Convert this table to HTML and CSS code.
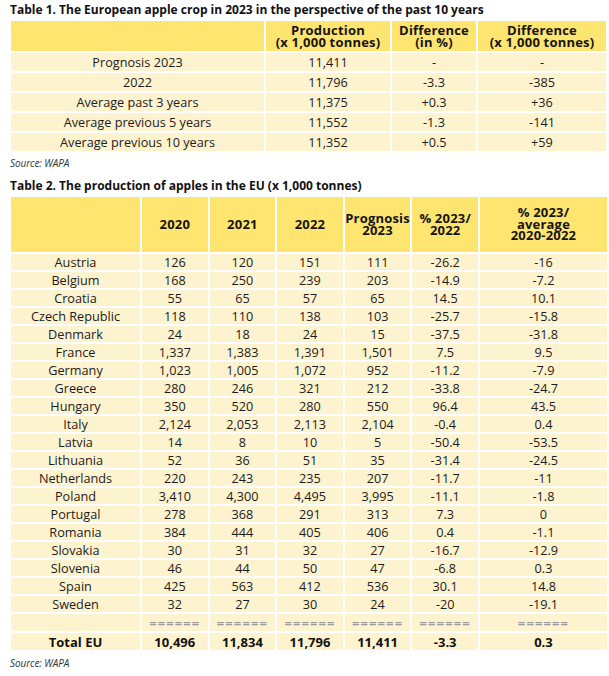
FILE: index.html
```html
<!DOCTYPE html>
<html>
<head>
<meta charset="utf-8">
<link rel="stylesheet" href="styles.css">
</head>
<body>
<div class="page">
  <h2 class="title t1">Table 1. The European apple crop in 2023 in the perspective of the past 10 years</h2>
  <table class="tbl tbl1">
    <colgroup><col class="c1a"><col class="c1b"><col class="c1c"><col class="c1d"></colgroup>
    <thead>
      <tr class="head1">
        <th></th>
        <th>Production<br>(x 1,000 tonnes)</th>
        <th>Difference<br>(in %)</th>
        <th>Difference<br>(x 1,000 tonnes)</th>
      </tr>
    </thead>
    <tbody>
      <tr><td>Prognosis 2023</td><td>11,411</td><td>-</td><td>-</td></tr>
      <tr><td>2022</td><td>11,796</td><td>-3.3</td><td>-385</td></tr>
      <tr><td>Average past 3 years</td><td>11,375</td><td>+0.3</td><td>+36</td></tr>
      <tr><td>Average previous 5 years</td><td>11,552</td><td>-1.3</td><td>-141</td></tr>
      <tr><td>Average previous 10 years</td><td>11,352</td><td>+0.5</td><td>+59</td></tr>
    </tbody>
  </table>
  <p class="source s1">Source: WAPA</p>

  <h2 class="title t2">Table 2. The production of apples in the EU (x 1,000 tonnes)</h2>
  <table class="tbl tbl2">
    <colgroup><col class="c2a"><col class="c2n"><col class="c2n"><col class="c2n"><col class="c2n"><col class="c2n"><col class="c2z"></colgroup>
    <thead>
      <tr class="head2">
        <th></th>
        <th>2020</th>
        <th>2021</th>
        <th>2022</th>
        <th>Prognosis<br>2023</th>
        <th>% 2023/<br>2022</th>
        <th>% 2023/<br>average<br>2020-2022</th>
      </tr>
    </thead>
    <tbody>
      <tr><td>Austria</td><td>126</td><td>120</td><td>151</td><td>111</td><td>-26.2</td><td>-16</td></tr>
      <tr><td>Belgium</td><td>168</td><td>250</td><td>239</td><td>203</td><td>-14.9</td><td>-7.2</td></tr>
      <tr><td>Croatia</td><td>55</td><td>65</td><td>57</td><td>65</td><td>14.5</td><td>10.1</td></tr>
      <tr><td>Czech Republic</td><td>118</td><td>110</td><td>138</td><td>103</td><td>-25.7</td><td>-15.8</td></tr>
      <tr><td>Denmark</td><td>24</td><td>18</td><td>24</td><td>15</td><td>-37.5</td><td>-31.8</td></tr>
      <tr><td>France</td><td>1,337</td><td>1,383</td><td>1,391</td><td>1,501</td><td>7.5</td><td>9.5</td></tr>
      <tr><td>Germany</td><td>1,023</td><td>1,005</td><td>1,072</td><td>952</td><td>-11.2</td><td>-7.9</td></tr>
      <tr><td>Greece</td><td>280</td><td>246</td><td>321</td><td>212</td><td>-33.8</td><td>-24.7</td></tr>
      <tr><td>Hungary</td><td>350</td><td>520</td><td>280</td><td>550</td><td>96.4</td><td>43.5</td></tr>
      <tr><td>Italy</td><td>2,124</td><td>2,053</td><td>2,113</td><td>2,104</td><td>-0.4</td><td>0.4</td></tr>
      <tr><td>Latvia</td><td>14</td><td>8</td><td>10</td><td>5</td><td>-50.4</td><td>-53.5</td></tr>
      <tr><td>Lithuania</td><td>52</td><td>36</td><td>51</td><td>35</td><td>-31.4</td><td>-24.5</td></tr>
      <tr><td>Netherlands</td><td>220</td><td>243</td><td>235</td><td>207</td><td>-11.7</td><td>-11</td></tr>
      <tr><td>Poland</td><td>3,410</td><td>4,300</td><td>4,495</td><td>3,995</td><td>-11.1</td><td>-1.8</td></tr>
      <tr><td>Portugal</td><td>278</td><td>368</td><td>291</td><td>313</td><td>7.3</td><td>0</td></tr>
      <tr><td>Romania</td><td>384</td><td>444</td><td>405</td><td>406</td><td>0.4</td><td>-1.1</td></tr>
      <tr><td>Slovakia</td><td>30</td><td>31</td><td>32</td><td>27</td><td>-16.7</td><td>-12.9</td></tr>
      <tr><td>Slovenia</td><td>46</td><td>44</td><td>50</td><td>47</td><td>-6.8</td><td>0.3</td></tr>
      <tr><td>Spain</td><td>425</td><td>563</td><td>412</td><td>536</td><td>30.1</td><td>14.8</td></tr>
      <tr><td>Sweden</td><td>32</td><td>27</td><td>30</td><td>24</td><td>-20</td><td>-19.1</td></tr>
      <tr class="sep"><td></td><td>======</td><td>======</td><td>======</td><td>======</td><td>======</td><td>======</td></tr>
      <tr class="total"><td>Total EU</td><td>10,496</td><td>11,834</td><td>11,796</td><td>11,411</td><td>-3.3</td><td>0.3</td></tr>
    </tbody>
  </table>
  <p class="source s2">Source: WAPA</p>
</div>
</body>
</html>
```

FILE: styles.css
```css
html, body {
  margin: 0;
  padding: 0;
  background: #ffffff;
}
body {
  font-family: "Open Sans", "Liberation Sans", sans-serif;
  color: #1d1b1b;
}
.page {
  width: 609px;
  padding-left: 9px;
  box-sizing: border-box;
}
.title {
  margin: 0;
  font-size: 12px;
  font-weight: 700;
  line-height: 14px;
  letter-spacing: 0;
  padding-left: 1px;
  color: #111;
}
.t1 {
  padding-top: 3px;
  height: 16px;
}
.t2 {
  padding-top: 3px;
  height: 16px;
}
.tbl {
  border-collapse: separate;
  border-spacing: 2px;
  table-layout: fixed;
  width: 599px;
  font-size: 12.7px;
}
.tbl th, .tbl td {
  padding: 0;
  text-align: center;
  vertical-align: middle;
  overflow: hidden;
  white-space: nowrap;
}
.tbl th {
  background: #fee56f;
  font-weight: 700;
  font-size: 13px;
  letter-spacing: 0.2px;
  line-height: 12px;
  color: #161414;
}
.tbl td {
  background: #fef3cf;
  font-weight: 500;
  line-height: 12px;
  color: #1d1b1b;
}
.c1a { width: 253px; }
.c1b { width: 124px; }
.c1c { width: 84px; }
.c1d { width: 128px; }
.head1 th { height: 30px; }
.tbl1 tbody td { height: 18px; }

.c2a { width: 129px; }
.c2n { width: 65.6px; }
.c2z { width: 127px; }
.head2 th {
  height: 55px;
  line-height: 11.5px;
}
.tbl2 tbody td { height: 16px; }
.tbl2 tbody .sep td,
.tbl2 tbody .total td { height: 17px; }
.sep td {
  color: #9c9c9c;
  font-size: 13px;
  letter-spacing: 1.1px;
  font-weight: 700;
}
.total td {
  font-weight: 700;
  font-size: 13px;
  color: #111;
}
.source {
  margin: 0;
  font-size: 10px;
  font-style: italic;
  padding-left: 1px;
  color: #333;
  letter-spacing: -0.1px;
}
.s1 {
  height: 23px;
  line-height: 12px;
  padding-top: 4px;
  box-sizing: border-box;
}
.s2 {
  line-height: 12px;
  padding-top: 5px;
}
```
